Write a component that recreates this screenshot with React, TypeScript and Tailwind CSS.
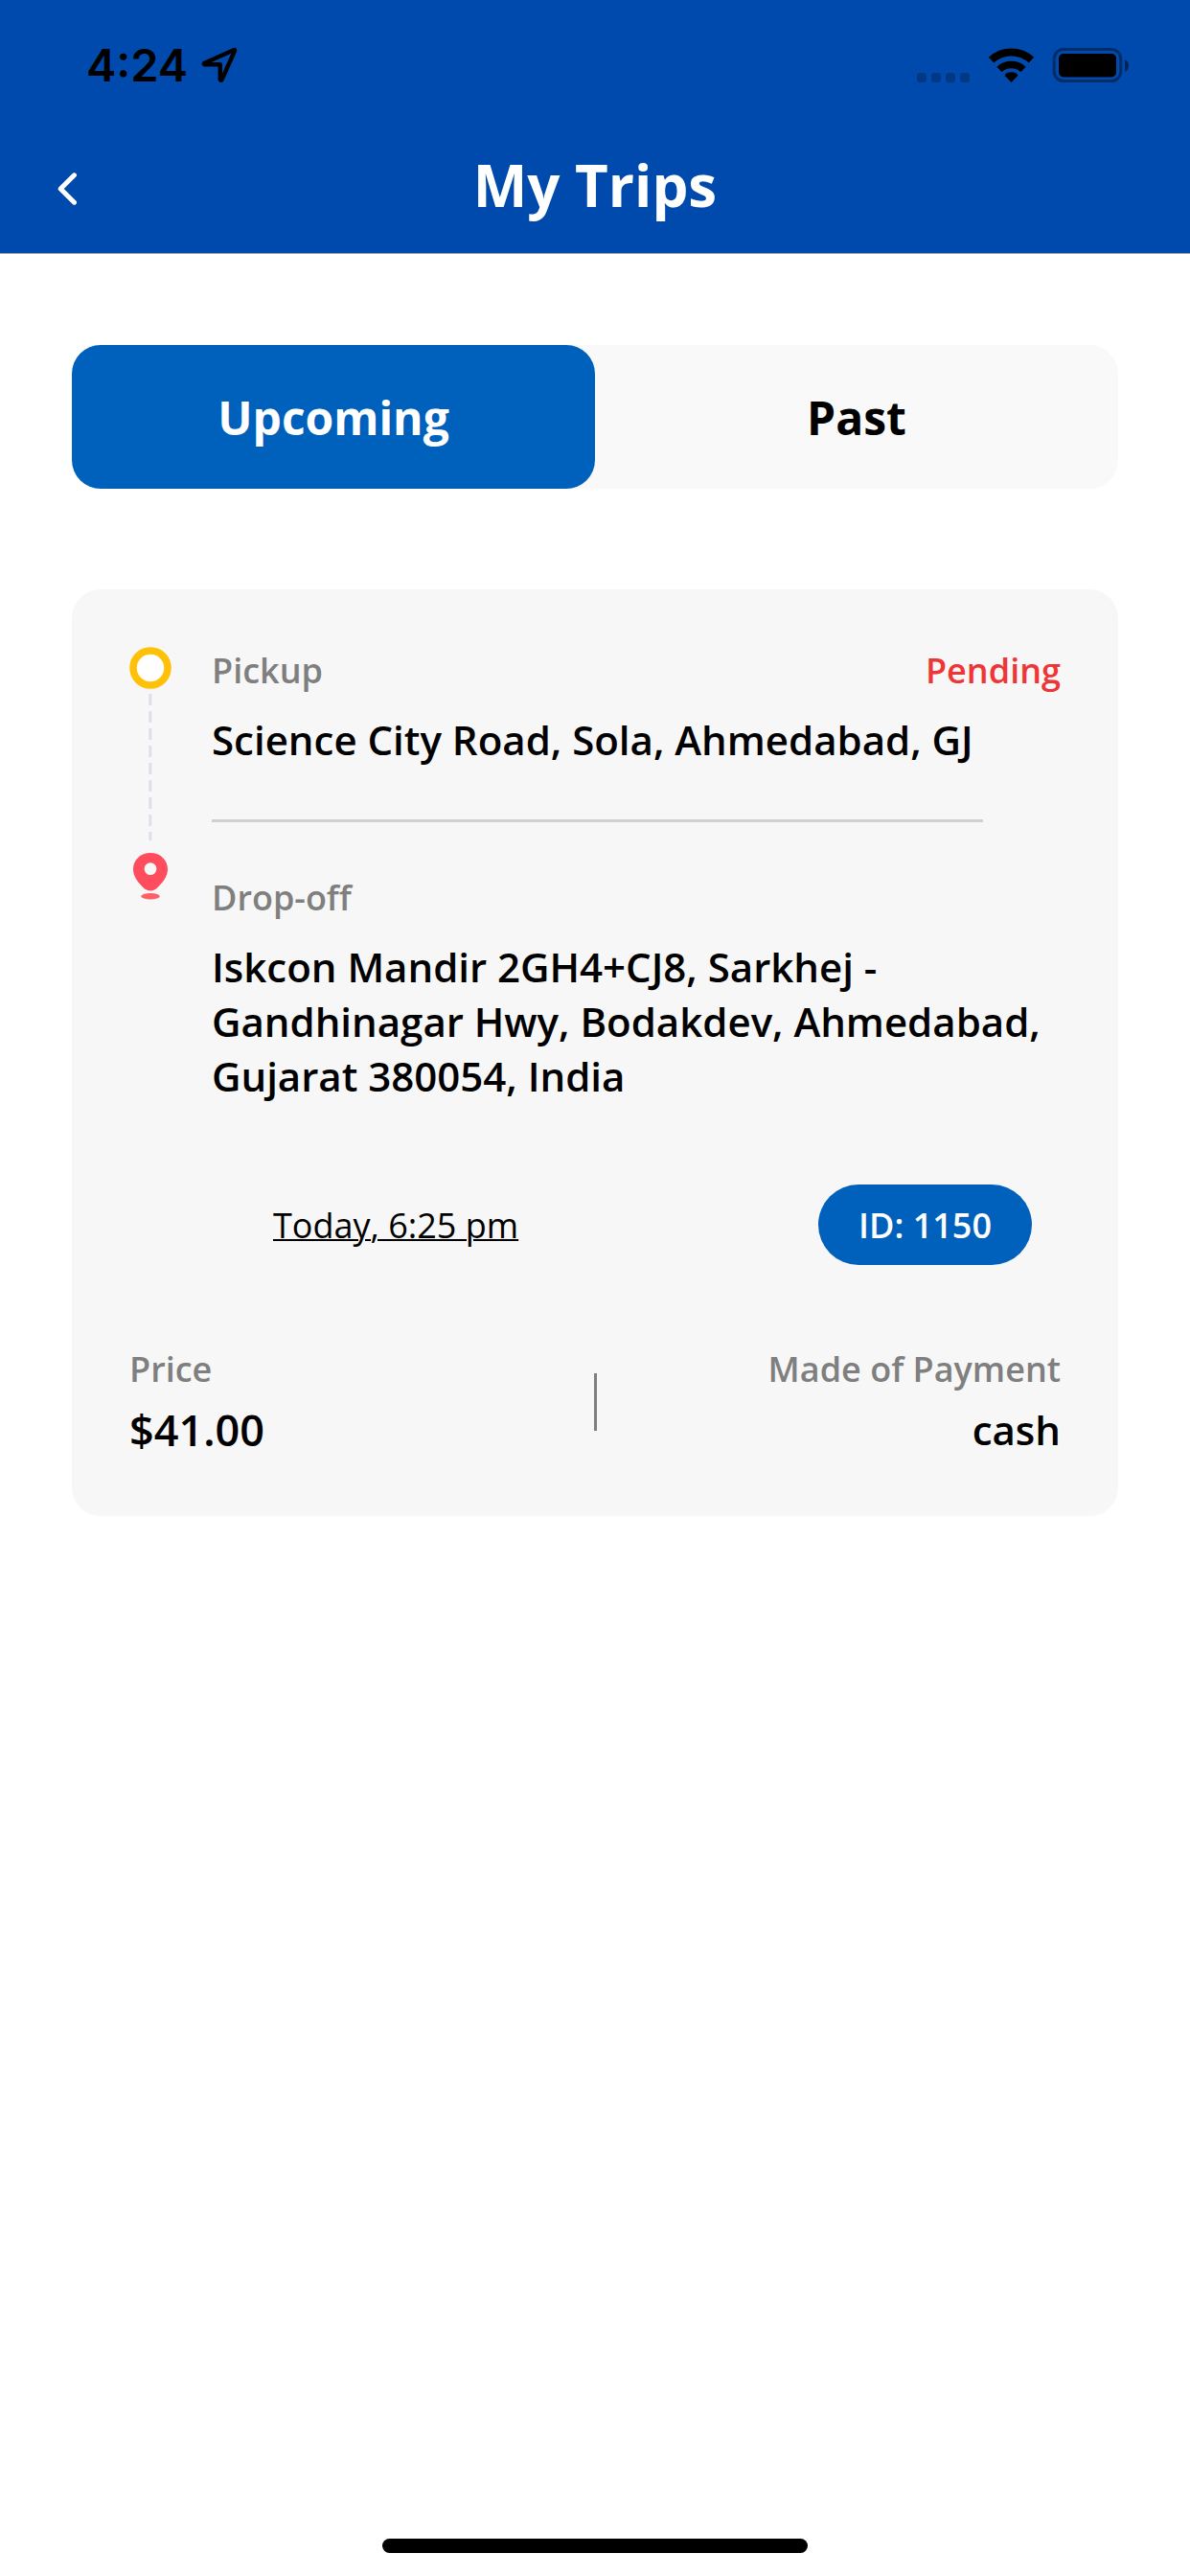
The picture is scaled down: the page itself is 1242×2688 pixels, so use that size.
import clsx from "clsx";
import { FC, useState } from "react";

const trip = {
  id: 1150,
  status: "Pending",
  pickup: "Science City Road, Sola, Ahmedabad, GJ",
  dropoff:
    "Iskcon Mandir 2GH4+CJ8, Sarkhej - Gandhinagar Hwy, Bodakdev, Ahmedabad, Gujarat 380054, India",
  time: "Today, 6:25 pm",
  price: "$41.00",
  payment: "cash",
};

const StatusBar: FC = () => (
  <div className="flex h-[135px] items-center justify-between pr-[63px] pl-[90px] text-black">
    <div className="flex items-center gap-3.5">
      <span className="font-['Inter',sans-serif] text-[47px] leading-[58px] font-semibold">
        4:24
      </span>
      <svg className="h-[38px] w-[38px]" viewBox="0 0 38 38" fill="none" aria-hidden="true">
        <path
          d="M34.5 3 3 17 Q2.4 18.1 3.4 18.2 H19.8 V34 Q20.6 35.6 21.6 34 L35 4 Q35.2 2.8 34.5 3Z"
          stroke="currentColor"
          strokeWidth="4.4"
          strokeLinejoin="round"
        />
      </svg>
    </div>
    <div className="flex items-center">
      <svg className="h-9 w-[222px]" viewBox="0 0 222 36" aria-hidden="true">
        <g fillOpacity="0.24">
          <rect x="0" y="26" width="10" height="10" rx="3" />
          <rect x="15" y="26" width="10" height="10" rx="3" />
          <rect x="30" y="26" width="10" height="10" rx="3" />
          <rect x="45" y="26" width="10" height="10" rx="3" />
        </g>
        <g fill="none" stroke="#000">
          <path d="M77.5 12.6 A31 31 0 0 1 119.5 12.6" strokeWidth="8" />
          <path d="M85.9 22.4 A18.5 18.5 0 0 1 111.1 22.4" strokeWidth="7.4" />
        </g>
        <path d="M98.5 36 91.7 29 Q92 25.2 98.5 25.2 T105.3 29Z" />
        <rect x="143.2" y="1.5" width="69.6" height="33" rx="10" fill="none" stroke="#000" strokeOpacity="0.4" strokeWidth="3" />
        <rect x="148" y="6" width="60" height="24.5" rx="5" />
        <path d="M217 12 Q221 14 221 18.5 T217 25Z" fillOpacity="0.5" />
      </svg>
    </div>
  </div>
);

const Header: FC = () => (
  <header className="border-b border-gray-400 bg-[#004aad]">
    <StatusBar />
    <div className="grid h-[129px] grid-cols-[1fr_auto_1fr] items-start px-[46px]">
      <button type="button" aria-label="Back" className="flex h-[124px] w-12 items-center justify-center text-white">
        <svg className="h-[34px] w-5" viewBox="0 0 20 34" fill="none" aria-hidden="true">
          <path
            d="M17.5 2.8 3.2 17 17.5 31.2"
            stroke="currentColor"
            strokeWidth="5"
            strokeLinecap="round"
            strokeLinejoin="round"
          />
        </svg>
      </button>
      <h1 className="mt-[17px] text-[60px] leading-[82px] font-bold text-white">My Trips</h1>
    </div>
  </header>
);

const Route: FC = () => (
  <svg className="h-[264px] w-11 shrink-0" viewBox="0 0 44 264" fill="none" aria-hidden="true">
    <circle cx="22" cy="22" r="18" fill="#fff" stroke="#ffc107" strokeWidth="7.5" />
    <path d="M21.8 49v153" stroke="#e0dfe9" strokeWidth="3" strokeDasharray="12 6" />
    <path
      fillRule="evenodd"
      fill="#ff4d5d"
      d="M22 215c10.5 0 18 7.5 18 17 0 7.5-5 14-12 20.5q-6 4-12 0C9 246 4 239.5 4 232c0-9.500 7.500-17 18-17Zm0 10.2a6.4 6.4 0 1 0 0 12.8 6.4 6.4 0 0 0 0-12.8Z"
    />
    <ellipse cx="22" cy="260.2" rx="9.8" ry="3.2" fill="#ff5f66" />
  </svg>
);

const TripCard: FC = () => (
  <article className="mt-[105px] rounded-[30px] bg-[#f7f7f7] p-15">
    <div className="flex gap-[42px]">
      <Route />
      <div className="grow">
        <div className="flex justify-between text-[36px] leading-[49px] font-semibold">
          <span className="text-[#7f7f7f]">Pickup</span>
          <span className="text-[#ef3636]">{trip.status}</span>
        </div>
        <p className="mt-[19px] text-[42px] leading-[57px] font-semibold">{trip.pickup}</p>
        <hr className="mt-[55px] mr-[81px] border-t-3 border-[#d0d0d0]" />
        <p className="mt-[54px] text-[36px] leading-[49px] font-semibold text-[#7f7f7f]">Drop-off</p>
        <p className="mt-[19px] text-[42px] leading-[57px] font-semibold">{trip.dropoff}</p>
      </div>
    </div>

    <div className="mt-[85px] flex items-center justify-between pr-[30px] pl-[150px] text-[36px] leading-[49px]">
      <a href="#schedule" className="underline decoration-2">
        {trip.time}
      </a>
      <span className="flex h-[84px] items-center rounded-full bg-[#0061bc] px-[42px] font-semibold text-white">
        ID: {trip.id}
      </span>
    </div>

    <div className="mt-[84px] grid grid-cols-[1fr_auto_1fr] items-center font-semibold">
      <div>
        <p className="text-[36px] leading-[49px] text-[#7f7f7f]">Price</p>
        <p className="mt-2 text-[45px] leading-[61px]">{trip.price}</p>
      </div>
      <div className="h-15 w-[3px] bg-[#7f7f7f]" />
      <div className="text-right">
        <p className="text-[36px] leading-[49px] text-[#7f7f7f]">Made of Payment</p>
        <p className="mt-2 text-[42px] leading-[61px]">{trip.payment}</p>
      </div>
    </div>
  </article>
);

export default function App() {
  const tabs = ["Upcoming", "Past"];
  const [active, setActive] = useState("Upcoming");

  return (
    <div className="flex min-h-screen flex-col bg-white font-['Open_Sans',sans-serif] text-black">
      <Header />
      <main className="grow px-[75px] pt-[95px]">
        <div role="tablist" className="flex rounded-[30px] bg-[#f9f9f9]">
          {tabs.map((tab) => (
            <button
              key={tab}
              type="button"
              role="tab"
              aria-selected={tab === active}
              onClick={() => setActive(tab)}
              className={clsx(
                "h-[150px] flex-1 rounded-[30px] text-[48px] leading-[65px] font-bold",
                tab === active ? "bg-[#0061bc] text-white" : "text-black"
              )}
            >
              {tab}
            </button>
          ))}
        </div>
        {active === "Upcoming" && <TripCard />}
      </main>
      <div className="mx-auto mb-6 h-[15px] w-[444px] rounded-full bg-black" />
    </div>
  );
}
